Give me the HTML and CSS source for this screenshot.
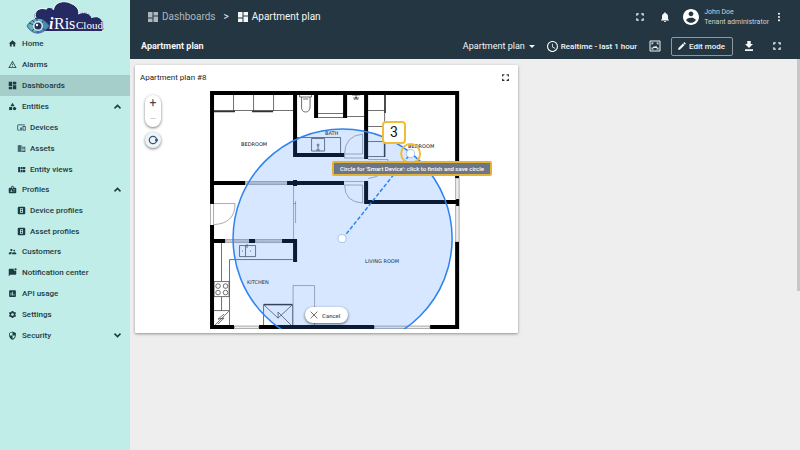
FILE: index.html
```html
<!DOCTYPE html>
<html lang="en">
<head>
<meta charset="utf-8">
<title>Apartment plan</title>
<link rel="stylesheet" href="styles.css">
</head>
<body>
<svg width="0" height="0" class="defs" aria-hidden="true">
  <symbol id="home" viewBox="0 0 24 24"><path d="M10 20v-6h4v6h5v-8h3L12 3 2 12h3v8z"/></symbol>
  <symbol id="alarm" viewBox="0 0 24 24"><path d="M12 5.99L19.53 19H4.47L12 5.99M12 2L1 21h22L12 2zm1 14h-2v2h2v-2zm0-6h-2v4h2v-4z"/></symbol>
  <symbol id="dash" viewBox="0 0 24 24"><path d="M2 2h9v11H2zM2 15h9v7H2zM13 2h9v7h-9zM13 11h9v11h-9z"/></symbol>
  <symbol id="category" viewBox="0 0 24 24"><path d="M12 2l-5.500 9h11z"/><circle cx="17.500" cy="17.500" r="4.500"/><path d="M3 13.500h8v8H3z"/></symbol>
  <symbol id="devices" viewBox="0 0 24 24"><path d="M3 6h18V4H3c-1.100 0-2 .9-2 2v12c0 1.100.9 2 2 2h4v-2H3V6zm10 6H9v1.780c-.61.55-1 1.330-1 2.220s.39 1.670 1 2.220V20h4v-1.780c.61-.55 1-1.340 1-2.220s-.39-1.670-1-2.220V12zm-2 5.500c-.83 0-1.500-.67-1.500-1.500s.67-1.500 1.500-1.500 1.500.67 1.500 1.500-.67 1.500-1.500 1.500zM22 8h-6c-.5 0-1 .5-1 1v10c0 .5.5 1 1 1h6c.5 0 1-.5 1-1V9c0-.5-.5-1-1-1zm-1 10h-4v-8h4v8z"/></symbol>
  <symbol id="assets" viewBox="0 0 24 24"><path d="M2 3h10v18H2z" opacity=".75"/><path d="M12 7h10v14H12v-2h8V9h-8zM14 11h4v2h-4zM14 15h4v2h-4z"/></symbol>
  <symbol id="views" viewBox="0 0 24 24"><path d="M3 5v14h5V5zM9.500 5v6.500H15V5zM16 5v6.500h6V5zM9.500 13v6H15v-6zM16 13v6h6v-6z"/></symbol>
  <symbol id="badge" viewBox="0 0 24 24"><path fill-rule="evenodd" d="M20 7h-5V4c0-1.100-.9-2-2-2h-2c-1.100 0-2 .9-2 2v3H4c-1.100 0-2 .9-2 2v11c0 1.100.9 2 2 2h16c1.100 0 2-.9 2-2V9c0-1.100-.9-2-2-2zM9 12a1.500 1.500 0 1 1 0 3 1.500 1.500 0 0 1 0-3zm3 6H6v-.75c0-1 2-1.500 3-1.500s3 .5 3 1.500V18zm1-9h-2V4h2v5zm5 7.500h-4V15h4v1.500zm0-3h-4V12h4v1.500z"/></symbol>
  <symbol id="profile" viewBox="0 0 24 24"><path fill-rule="evenodd" d="M5 2h14q3 0 3 3v14q0 3-3 3H5q-3 0-3-3V5q0-3 3-3zm3 4v12h8V6zm2 2h4v3h-4zm0 5h4v3h-4z"/></symbol>
  <symbol id="people" viewBox="0 0 24 24"><path d="M16.500 12c1.380 0 2.490-1.120 2.490-2.500S17.880 7 16.500 7 14 8.120 14 9.500s1.120 2.500 2.500 2.500zM9 11c1.660 0 2.990-1.340 2.990-3S10.660 5 9 5 6 6.340 6 8s1.340 3 3 3zm7.500 3c-1.830 0-5.500.92-5.500 2.750V19h11v-2.250c0-1.830-3.670-2.750-5.500-2.750zM9 13c-2.330 0-7 1.170-7 3.500V19h7v-2.250c0-.85.33-2.340 2.370-3.470C10.500 13.100 9.660 13 9 13z"/></symbol>
  <symbol id="chat" viewBox="0 0 24 24"><path d="M22 7.500V16c0 1.100-.9 2-2 2H6l-4 4V4c0-1.100.9-2 2-2h11c-.7 3 2 6 5 5.800z"/><circle cx="20" cy="3.500" r="3"/></symbol>
  <symbol id="chart" viewBox="0 0 24 24"><path d="M19 3H5c-1.100 0-2 .9-2 2v14c0 1.100.9 2 2 2h14c1.100 0 2-.9 2-2V5c0-1.100-.9-2-2-2zM9 17H7v-7h2v7zm4 0h-2V7h2v10zm4 0h-2v-4h2v4z"/></symbol>
  <symbol id="gear" viewBox="0 0 24 24"><path d="M19.140 12.940c.04-.3.06-.61.06-.94 0-.32-.02-.64-.07-.94l2.030-1.580c.18-.14.23-.41.12-.61l-1.920-3.320c-.12-.22-.37-.29-.59-.22l-2.390.96c-.5-.38-1.030-.7-1.620-.94l-.36-2.540c-.04-.24-.24-.41-.48-.41h-3.840c-.24 0-.43.17-.47.41l-.36 2.540c-.59.24-1.130.57-1.620.94l-2.390-.96c-.22-.08-.47 0-.59.22L2.740 8.870c-.12.21-.08.47.12.61l2.030 1.580c-.05.3-.09.63-.09.94s.02.64.07.94l-2.030 1.580c-.18.14-.23.41-.12.61l1.920 3.320c.12.22.37.29.59.22l2.390-.96c.5.38 1.030.7 1.620.94l.36 2.540c.05.24.24.41.48.41h3.840c.24 0 .44-.17.47-.41l.36-2.540c.59-.24 1.130-.56 1.620-.94l2.390.96c.22.08.47 0 .59-.22l1.920-3.320c.12-.22.07-.47-.12-.61l-2.010-1.580zM12 15.600c-1.980 0-3.600-1.620-3.600-3.600s1.620-3.600 3.600-3.600 3.600 1.620 3.600 3.600-1.620 3.600-3.600 3.600z"/></symbol>
  <symbol id="shield" viewBox="0 0 24 24"><path d="M12 1L3 5v6c0 5.550 3.840 10.740 9 12 5.160-1.260 9-6.450 9-12V5l-9-4zm0 10.990h7c-.53 4.120-3.280 7.790-7 8.940V12H5V6.300l7-3.110v8.800z"/></symbol>
  <symbol id="up" viewBox="0 0 24 24"><path d="M4 17l8-8 8 8" fill="none" stroke="currentColor" stroke-width="4"/></symbol>
  <symbol id="down" viewBox="0 0 24 24"><path d="M4 7l8 8 8-8" fill="none" stroke="currentColor" stroke-width="4"/></symbol>
  <symbol id="full" viewBox="0 0 24 24"><path d="M3 3h6v3H6v3H3zM15 3h6v6h-3V6h-3zM3 15h3v3h3v3H3zM18 15h3v6h-6v-3h3z"/></symbol>
  <symbol id="bell" viewBox="0 0 24 24"><path d="M12 22c1.100 0 2-.9 2-2h-4c0 1.100.89 2 2 2zm6-6v-5c0-3.070-1.640-5.640-4.500-6.320V4c0-.83-.67-1.500-1.500-1.500s-1.500.67-1.500 1.500v.68C7.630 5.360 6 7.920 6 11v5l-2 2v1h16v-1l-2-2z"/></symbol>
  <symbol id="account" viewBox="2 2 20 20"><path d="M12 2C6.480 2 2 6.480 2 12s4.480 10 10 10 10-4.480 10-10S17.520 2 12 2zm0 3c1.660 0 3 1.340 3 3s-1.340 3-3 3-3-1.340-3-3 1.340-3 3-3zm0 14.200c-2.500 0-4.710-1.280-6-3.220.03-1.990 4-3.080 6-3.080 1.990 0 5.970 1.090 6 3.080-1.290 1.940-3.500 3.220-6 3.220z"/></symbol>
  <symbol id="more" viewBox="0 0 24 24"><circle cx="12" cy="4" r="2.500"/><circle cx="12" cy="12" r="2.500"/><circle cx="12" cy="20" r="2.500"/></symbol>
  <symbol id="clock" viewBox="2 2 20 20"><path d="M11.990 2C6.470 2 2 6.480 2 12s4.470 10 9.990 10C17.520 22 22 17.520 22 12S17.520 2 11.990 2zM12 20c-4.420 0-8-3.580-8-8s3.580-8 8-8 8 3.580 8 8-3.580 8-8 8zm.5-13H11v6l5.250 3.150.75-1.230-4.500-2.670z"/></symbol>
  <symbol id="image" viewBox="0 0 24 24"><path d="M2 2h20v20H2z" fill="none" stroke="currentColor" stroke-width="2"/><path d="M5 5h4v2H7v2H5zM15 5h4v4h-2V7h-2zM5 15h2v2h2v2H5zM17 15h2v4h-4v-2h2zM7 16l3-4 2 2 2-3 3 5z"/></symbol>
  <symbol id="pencil" viewBox="0 0 24 24"><path d="M3 17.250V21h3.750L17.810 9.940l-3.750-3.750L3 17.250zM20.710 7.040c.39-.39.39-1.020 0-1.410l-2.340-2.340c-.39-.39-1.020-.39-1.410 0l-1.830 1.830 3.750 3.750 1.830-1.830z"/></symbol>
  <symbol id="download" viewBox="0 0 24 24"><path d="M20 8h-4.500V2h-7v6H4l8 8 8-8zM4 18.500V22h16v-3.500H4z"/></symbol>
  <symbol id="close" viewBox="0 0 24 24"><path d="M4 4l16 16M20 4L4 20" fill="none" stroke="currentColor" stroke-width="2"/></symbol>
</svg>

<div class="app">
  <aside class="sidebar">
    <svg class="logo" viewBox="0 0 78 32" role="img" aria-label="iRis Cloud">
      <path d="M10 19C6 13 11 6 20 8.500 23 6 26 7 28 9 29 0 40-1 46 3c5 2 7 6 6 10 6-4 13-1 14 4 6-2 10 1 10 5v8H14z" fill="#252a63"/>
      <path d="M10 17C7 11 13 5 21 8M27 9C28 1 38-1 44 2q8 3 9 9M52 13c6-3 12-1 14 4" fill="none" stroke="#effafa" stroke-width="1"/>
      <path d="M1 25C5 17 17 15 23 25 16 35 6 34 1 25z" fill="#478fae" stroke="#536ba8"/>
      <path d="M2 25C6 18 13 17 17 19L9 31Q4 29 2 25z" fill="#62b8b3"/>
      <path d="M3 22l5 2M6 19l4 4M11 18v4M17 20l-3 3M6 30l4-4M12 32v-4M19 29l-4-3" stroke="#35457c"/>
      <circle cx="12" cy="25" r="5" fill="#dcebf0"/><circle cx="12" cy="25" r="3.500" fill="#26305f"/><circle cx="11" cy="24" r="1.200" fill="#fff"/>
      <g class="logo-text"><text x="23" y="28" class="logo-i">i</text><text x="28" y="28" class="logo-name">Ris</text><text x="50" y="28" class="logo-cloud">Cloud</text></g>
    </svg>
    <nav>
      <a href="#"><svg><use href="#home"/></svg>Home</a>
      <a href="#"><svg><use href="#alarm"/></svg>Alarms</a>
      <a href="#" class="active"><svg><use href="#dash"/></svg>Dashboards</a>
      <a href="#"><svg><use href="#category"/></svg>Entities<svg class="arrow"><use href="#up"/></svg></a>
      <div class="sub">
        <a href="#"><svg><use href="#devices"/></svg>Devices</a>
        <a href="#"><svg><use href="#assets"/></svg>Assets</a>
        <a href="#"><svg><use href="#views"/></svg>Entity views</a>
      </div>
      <a href="#"><svg><use href="#badge"/></svg>Profiles<svg class="arrow"><use href="#up"/></svg></a>
      <div class="sub">
        <a href="#"><svg><use href="#profile"/></svg>Device profiles</a>
        <a href="#"><svg><use href="#profile"/></svg>Asset profiles</a>
      </div>
      <a href="#"><svg><use href="#people"/></svg>Customers</a>
      <a href="#"><svg><use href="#chat"/></svg>Notification center</a>
      <a href="#"><svg><use href="#chart"/></svg>API usage</a>
      <a href="#"><svg><use href="#gear"/></svg>Settings</a>
      <a href="#"><svg><use href="#shield"/></svg>Security<svg class="arrow"><use href="#down"/></svg></a>
    </nav>
  </aside>

  <div class="page">
    <header>
      <div class="topbar">
        <div class="crumbs">
          <a href="#" class="muted"><svg><use href="#dash"/></svg>Dashboards</a>
          <span>&gt;</span>
          <a href="#"><svg><use href="#dash"/></svg>Apartment plan</a>
        </div>
        <div class="account">
          <button type="button" aria-label="Fullscreen"><svg><use href="#full"/></svg></button>
          <button type="button" class="bell" aria-label="Notifications"><svg><use href="#bell"/></svg></button>
          <div class="user">
            <svg class="avatar"><use href="#account"/></svg>
            <div><div>John Doe</div><div>Tenant administrator</div></div>
          </div>
          <button type="button" aria-label="More"><svg><use href="#more"/></svg></button>
        </div>
      </div>
      <div class="toolbar">
        <h1>Apartment plan</h1>
        <div class="tools">
          <button type="button" class="state">Apartment plan<i class="caret"></i></button>
          <button type="button" class="time"><svg><use href="#clock"/></svg>Realtime - last 1 hour</button>
          <button type="button" class="picture" aria-label="Dashboard image"><svg><use href="#image"/></svg></button>
          <button type="button" class="edit"><svg><use href="#pencil"/></svg>Edit mode</button>
          <button type="button" class="save" aria-label="Export"><svg><use href="#download"/></svg></button>
          <button type="button" aria-label="Expand"><svg><use href="#full"/></svg></button>
        </div>
      </div>
    </header>

    <main>
      <section class="card">
        <div class="card-head">
          <h2>Apartment plan #8</h2>
          <button type="button" aria-label="Expand widget"><svg><use href="#full"/></svg></button>
        </div>
        <div class="map">
          <svg class="plan" viewBox="135 89 383 240">
            <g class="thin">
              <path d="M233.500 94v17M253.500 94v17M273.500 94v17M213 110.500h80"/>
              <path d="M213 111.500h22M252 111.500h21" stroke-width="1.500"/>
              <path d="M299.500 94v3h12v-3M301.500 97v10q0 5 4 5t4.500-5V97M303 99h5M318 113.500h26M318 117.500h26M347 116.500h17M352 95h8M353 98h6M356 94v6M354 100l2-3 2 3"/>
              <path d="M295 137.500h45.500V153M311.500 138.500h13v12.500h-13zM318 146v4M316 150h4"/><circle cx="318" cy="145" r="1"/>
              <path d="M368 110.500h17M368 126.500h17M368 141.500h17M368 156.500h17M384.500 94v63"/><path d="M385 94v19M384.500 141v16" stroke-width="1.500"/>
              <path d="M221.500 243v38M229.500 326V259.500h63M214 281.500h15v15h-15zM221.500 297v13.500M214 310.500h15M214 326l15-15"/>
              <path d="M224 314l-6 5 6-1-6 6M239.500 245.500h16v11h-16zM245.500 245.500v11M247 248v-4M242 251h1M250 251h1"/>
              <circle cx="218" cy="286" r="2.300"/><circle cx="225.500" cy="286" r="2.300"/><circle cx="218" cy="292.500" r="2.300"/><circle cx="225.500" cy="292.500" r="2.300"/>
              <path d="M263.500 304.500h29" stroke-width="1.500"/><path d="M263.500 304.500V326M292.500 304.500V326M264 305l14 13v-6l14 14M278 318l14-13"/>
            </g>
            <g class="light">
              <path d="M213 203.500h22q0 20-21 21M210.500 204v21M213.500 204v21M344.500 154q0-18 18-20v20zM344.500 185q0 17 18 18v-18zM368 159.500h20q-1 17-20 19M293.500 185v54M295.500 201v22M293 203.500h3M293 285.500h21.500V326M293 285.500V326M344.500 154v4h19M344.500 181.500h19"/>
              <path d="M245.500 181.500h42v3h-42zM246 183h41M225.500 239.500h24v3h-24zM226 241h23M255.500 239.500h27v3h-27zM256 241h26" fill="#eee"/>
              <path d="M455.500 178h3.500v64h-3.500zM234.500 326h24v2.500h-24zM374.500 326h55v2.500h-55z" fill="#eee"/>
            </g>
            <path class="wall" d="M210 91h249v4H210zM210 91h4v113h-4zM210 225h4v104h-4zM455 91h4v87h-4zM455 242h4v87h-4zM293 94h4v63h-4zM293 153h51v4h-51zM314 94h4v24h-4zM343 94h4v24h-4zM364 94h4v65h-4zM364 181h4v22h-4zM364 200h95v4h-95zM456 199h3v7h-3zM213 181h32v4h-32zM287 181h57v4h-57zM293 180h4v6h-4zM213 239h12v4h-12zM249 239h6v4h-6zM282 239h15v4h-15zM293 239h4v23h-4zM210 325h24v4h-24zM259 325h115v4H259zM430 325h29v4h-29z"/>
            <g class="rooms"><text x="241" y="146">BEDROOM</text><text x="408" y="148">BEDROOM</text><text x="325" y="135">BATH</text><text x="365" y="263">LIVING ROOM</text><text x="247" y="284">KITCHEN</text></g>
            <circle class="area" cx="342.500" cy="238.500" r="109.500"/>
            <path class="radius" d="M342.500 238.500L410.500 153.500"/>
            <circle class="handle" cx="342" cy="238.500" r="4"/><circle class="handle" cx="410.500" cy="153.500" r="4"/>
            <circle class="ring" cx="410.500" cy="153.500" r="9.500"/>
          </svg>
          <div class="controls">
            <div class="zoom"><button type="button">+</button><button type="button" disabled>−</button></div>
            <button type="button" class="round" aria-label="Draw circle"><svg viewBox="0 0 12 12"><circle cx="6" cy="6" r="3.700" fill="none" stroke="#38557f" stroke-width="1.200"/><circle cx="9.500" cy="6" r="1.500" fill="#38557f"/></svg></button>
          </div>
          <div class="step">3</div>
          <div class="hint">Circle for 'Smart Device': click to finish and save circle</div>
          <button type="button" class="cancel"><svg><use href="#close"/></svg>Cancel</button>
        </div>
      </section>
      <div class="scrollbar"></div>
    </main>
  </div>
</div>
</body>
</html>
```

FILE: styles.css
```css
* { box-sizing: border-box; }
body { margin: 0; font-family: Roboto, sans-serif; font-size: 8px; color: #222; background: #eee; }
a { color: inherit; text-decoration: none; }
button { display: flex; align-items: center; padding: 0; border: 0; background: none; color: inherit; font: inherit; }
svg { fill: currentColor; flex: none; }
h1, h2 { margin: 0; }
.defs { position: absolute; }

.app { display: grid; grid-template-columns: 130px 1fr; min-height: 100vh; }
.sidebar { background: #c0ede8; color: #1d3b43; }
.logo { display: block; width: 78px; height: 32px; margin: 1px 0 0 26px; overflow: visible; }
.logo-text { font-family: "Liberation Serif", serif; fill: #fff; stroke: #252a63; stroke-width: 1px; paint-order: stroke; }
.logo-i { font-size: 16px; font-style: italic; font-weight: bold; }
.logo-name { font-size: 16px; }
.logo-cloud { font-size: 11px; }
nav a { display: flex; align-items: center; gap: 5px; height: 21px; padding: 0 8px; font-weight: 500; }
nav svg { width: 9px; height: 9px; }
nav .arrow { margin-left: auto; }
.active { background: #a5cdca; }
.sub { margin-bottom: -1px; }
.sub a { padding-left: 17px; gap: 4px; }

.page { display: flex; flex-direction: column; min-width: 0; }
header { background: #233642; color: #f4f6f7; }
header svg { width: 10px; height: 10px; }
.topbar, .toolbar { display: flex; align-items: center; justify-content: space-between; }
.topbar { height: 33px; padding: 0 16px 0 17px; }
.crumbs { display: flex; align-items: center; gap: 8px; font-size: 10px; }
.crumbs a { display: flex; align-items: center; gap: 3px; }
.crumbs svg { width: 12px; height: 12px; }
.crumbs .muted { color: #aeb7bd; }
.account { display: flex; align-items: center; gap: 14px; }
.account .bell svg { width: 12px; height: 12px; }
.user { display: flex; align-items: center; gap: 5px; margin-left: -2px; font-size: 7px; line-height: 10px; color: #cbd2d6; }
.account .avatar { width: 16px; height: 16px; color: #fff; }
.account > button:last-child { margin-left: -9px; }
.toolbar { height: 26px; padding: 0 18px 0 11px; }
h1 { font-size: 9px; font-weight: 700; }
.tools { display: flex; align-items: center; gap: 12px; font-size: 9px; }
.state { gap: 4px; }
.caret { border: 3px solid transparent; border-top-color: currentColor; border-bottom: 0; }
.time { gap: 3px; font-size: 8px; font-weight: 500; }
.time svg { width: 11px; height: 11px; }
.picture svg { width: 12px; height: 12px; }
.edit { gap: 2px; height: 19px; margin-left: -2px; padding: 0 7px 0 5px; border: 1px solid #8e9aa2; border-radius: 2px; font-size: 8px; font-weight: 500; }
.save { margin-left: -2px; }
.save svg { width: 12px; height: 12px; }
.tools button:last-child { margin-left: 5px; }

main { display: grid; grid-template-columns: 7fr 5fr 3px; flex: 1; align-items: start; padding: 0 0 0 5px; }
.card { margin: 6px 3px 6px 0; background: #fff; box-shadow: 0 1px 3px #0006; border-radius: 1px; }
.card-head { display: flex; align-items: center; justify-content: space-between; height: 24px; padding: 0 8px 0 5px; }
h2 { font-size: 8px; font-weight: 400; }
.card-head svg { width: 9px; height: 9px; }
.map { position: relative; padding-bottom: 4px; }
.plan { display: block; width: 100%; }
.thin { fill: none; stroke: #333; stroke-width: .7; }
.light { fill: none; stroke: #888; stroke-width: .7; }
.wall { fill: #000; }
.rooms { font-family: "DejaVu Sans", sans-serif; font-size: 5px; fill: #111; }
.area { fill: #3388ff33; stroke: #2f83f0; stroke-width: 1.500; }
.radius { stroke: #2f83f0; stroke-width: 1.500; stroke-dasharray: 4 2; }
.handle { fill: #fff; stroke: #8ab0e0; stroke-width: .7; }
.ring { fill: none; stroke: #f0bd38; stroke-width: 2; }

.controls { position: absolute; left: 10px; top: 6px; display: grid; gap: 5px; }
.zoom { display: grid; grid-template-rows: 1fr 1fr; width: 16px; height: 32px; border-radius: 8px; background: #fff; box-shadow: 0 1px 3px #0008; }
.zoom button { justify-content: center; font-size: 12px; color: #444; }
.zoom button:disabled { color: #ccc; }
.round { justify-content: center; width: 16px; height: 16px; border-radius: 50%; background: #edf4f6; box-shadow: 0 1px 3px #0008; }
.round svg { width: 12px; height: 12px; }
.step { position: absolute; left: 247px; top: 32px; width: 24px; height: 23px; border: 2px solid #f0bd38; border-radius: 4px; background: #fff; color: #111; font-size: 14px; line-height: 19px; text-align: center; }
.hint { position: absolute; left: 197px; top: 72px; padding: 0 6px; border: 2px solid #e3b335; border-radius: 2px; background: #6d7684; color: #fff; font-size: 6px; font-weight: 500; line-height: 11px; white-space: nowrap; }
.cancel { position: absolute; left: 170px; bottom: 10px; gap: 3px; height: 16px; padding: 0 8px 0 4px; border-radius: 8px; background: #fff; box-shadow: 0 1px 3px #0009; color: #555; font-size: 6px; font-weight: 500; }
.cancel svg { width: 10px; height: 10px; }
.scrollbar { grid-column: 3; height: 232px; background: #c6c7c8; }
```
